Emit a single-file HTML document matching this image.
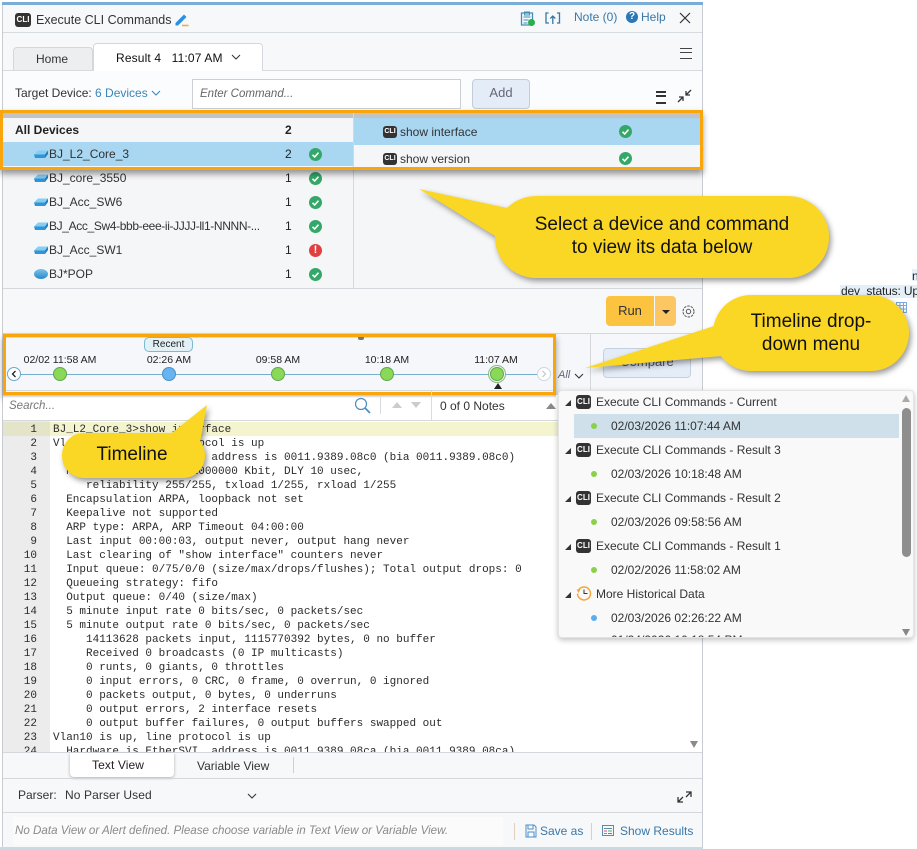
<!DOCTYPE html>
<html><head><meta charset="utf-8"><style>
html,body{margin:0;padding:0;background:#fff}
body{width:917px;height:849px;position:relative;overflow:hidden;font-family:"Liberation Sans",sans-serif;font-size:12px;color:#222}
.a{position:absolute;white-space:pre;line-height:14px}
.b{position:absolute}
.cli{position:absolute;width:15px;height:13px;background:#333;border-radius:3px;color:#fff;font-size:8px;line-height:13px;text-align:center;font-weight:bold}
.ck,.er{position:absolute;width:13px;height:13px;border-radius:50%;background:#34a868;color:#fff}
.er{background:#e04040;font-weight:bold;font-size:11px;line-height:13px;text-align:center}
.sw{position:absolute;left:34px;width:14px;height:8px}
.num{position:absolute;left:3px;width:34px;text-align:right;font:11px/14px "Liberation Mono",monospace;color:#2a2a2a}
.code{position:absolute;left:53px;white-space:pre;font:11px/14px "Liberation Mono",monospace;color:#2a2a2a}
.dot{position:absolute;width:14px;height:14px;border-radius:50%;background:#8ad858;border:1px solid #5fa84a;box-sizing:border-box}
.t{position:absolute;top:354px;width:90px;text-align:center;font-size:10.5px;line-height:13px;color:#222}
.rowt{position:absolute;left:596px;font-size:12px;line-height:14px;color:#333;white-space:pre}
.rowd{position:absolute;left:611px;font-size:12px;line-height:14px;color:#333;white-space:pre}
.tri{position:absolute;left:565px;width:0;height:0;border-left:6px solid transparent;border-bottom:6px solid #333}
.md{position:absolute;left:591px;width:6px;height:6px;border-radius:50%;background:#8ad04a}
.o{position:absolute;border:3px solid #f9a60d;box-sizing:border-box;box-shadow:0 4px 6px rgba(0,0,0,.4)}
</style></head><body>
<svg width="0" height="0" style="position:absolute"><symbol id="c" viewBox="0 0 13 13"><path d="M3.5 6.8l2.2 2.2 3.8-4.4" fill="none" stroke="#fff" stroke-width="1.6"/></symbol>
<symbol id="s" viewBox="0 0 14 8"><path d="M4 .5h10L11 4.500H0z" fill="#86cdf2"/><path d="M0 4.500h11V8H1z" fill="#2f94d8"/><path d="M11 4.500L14 .5v3.500L11 8z" fill="#1f7cc0"/></symbol></svg>

<!-- far right fragments -->
<div class="b" style="left:912px;top:269px;width:5px;height:12px;background:#e4eff8"></div>
<div class="a" style="left:912px;top:269px">n</div>
<div class="b" style="left:840px;top:285px;width:77px;height:13px;background:#e4eff8"></div>
<div class="a" style="left:841px;top:284px;letter-spacing:-.15px">dev_status: Up</div>
<svg class="b" style="left:896px;top:302px" width="11" height="11"><path d="M.5.5h10v10H.5zM.5 3.5h10M.5 7h10M4 .5v10M7.5.5v10" fill="none" stroke="#7ba9e0"/></svg>

<!-- panel -->
<div class="b" style="left:2px;top:2px;width:701px;height:847px;background:#f6f8fa;border-left:1px solid #c8ccd2;border-right:1px solid #c8ccd2;box-sizing:border-box"></div>
<div class="b" style="left:2px;top:2px;width:701px;height:3px;background:#7aacd8"></div>

<!-- header -->
<div class="cli" style="left:15px;top:13px;width:16px;height:14px;line-height:14px">CLI</div>
<div class="a" style="left:36px;top:13px;font-size:12.5px;color:#333">Execute CLI Commands</div>
<svg class="b" style="left:174px;top:12px" width="15" height="15"><path d="M1.500 11L10 2.500l2.500 2.500L4 13.500H1.500z" fill="#2b8fe0"/><path d="M8 13.500h6.500" stroke="#f2a63a" stroke-width="1.500"/></svg>
<svg class="b" style="left:520px;top:10px" width="16" height="17"><path d="M1.5 3h11v12h-11z" fill="none" stroke="#3f8fb8" stroke-width="1.3"/><path d="M4.500 2h5v3h-5zM3.500 7h7M3.500 10h5M3.500 13h4" fill="none" stroke="#3f8fb8"/><circle cx="11.500" cy="12.500" r="3.500" fill="#28b04a"/></svg>
<svg class="b" style="left:545px;top:11px" width="16" height="15"><path d="M3.500 2H1v10h3M12 2h2.500v10H12M7.800 13V5M5.300 7.500l2.500-2.500 2.500 2.500" fill="none" stroke="#3678a8" stroke-width="1.300"/></svg>
<div class="a" style="left:574px;top:10px;color:#3a78a8">Note (0)</div>
<div class="b" style="left:626px;top:11px;width:12px;height:12px;border-radius:50%;background:#2a78b8;color:#fff;font:bold 10px/12px 'Liberation Sans';text-align:center">?</div>
<div class="a" style="left:641px;top:10px;color:#3a78a8">Help</div>
<svg class="b" style="left:679px;top:12px" width="12" height="12"><path d="M1 1l10 10M11 1L1 11" stroke="#333" stroke-width="1.200"/></svg>
<div class="b" style="left:3px;top:32px;width:699px;height:1px;background:#d6dbe0"></div>

<!-- tabs -->
<div class="b" style="left:13px;top:47px;width:80px;height:24px;background:#eceef0;border:1px solid #d4d8dc;border-bottom:0;border-radius:4px 4px 0 0;box-sizing:border-box"></div>
<div class="a" style="left:36px;top:52px;color:#333">Home</div>
<div class="b" style="left:93px;top:43px;width:170px;height:28px;background:#fff;border:1px solid #d4d8dc;border-bottom:0;border-radius:4px 4px 0 0;box-sizing:border-box"></div>
<div class="a" style="left:116px;top:51px;color:#111;letter-spacing:.15px">Result 4   11:07 AM</div>
<svg class="b" style="left:231px;top:54px" width="10" height="7"><path d="M1 1l4 4 4-4" fill="none" stroke="#333"/></svg>
<div class="b" style="left:3px;top:70px;width:90px;height:1px;background:#d6dbe0"></div>
<div class="b" style="left:263px;top:70px;width:439px;height:1px;background:#d6dbe0"></div>
<div class="b" style="left:3px;top:71px;width:699px;height:40px;background:#fbfcfd"></div>
<div class="b" style="left:680px;top:48px;width:12px;height:9px;border-top:1px solid #444;border-bottom:1px solid #444"></div>
<div class="b" style="left:680px;top:52px;width:12px;height:1px;background:#444"></div>

<!-- target row -->
<div class="a" style="left:15px;top:86px;color:#333">Target Device: <span style="color:#3a86b8">6 Devices</span></div>
<svg class="b" style="left:151px;top:90px" width="10" height="7"><path d="M1 1l4 4 4-4" fill="none" stroke="#3a86b8"/></svg>
<div class="b" style="left:192px;top:79px;width:269px;height:30px;background:#fff;border:1px solid #ccd0d4;box-sizing:border-box"></div>
<div class="a" style="left:200px;top:87px;font-style:italic;color:#666;font-size:11.500px">Enter Command...</div>
<div class="b" style="left:472px;top:79px;width:58px;height:30px;background:#e4ecf8;border:1px solid #c4ccd8;border-radius:4px;box-sizing:border-box;text-align:center;line-height:26px;color:#667;font-size:13px">Add</div>
<div class="b" style="left:656px;top:91px;width:10px;height:9px;border-top:2px solid #333;border-bottom:2px solid #333"></div>
<div class="b" style="left:656px;top:95px;width:10px;height:2px;background:#333"></div>
<svg class="b" style="left:677px;top:89px" width="15" height="14"><path d="M14 1l-4.500 4.500M9 2v4h4M1 13l4.500-4.500M6 12V8H2" fill="none" stroke="#333" stroke-width="1.300"/></svg>

<!-- device list -->
<div class="b" style="left:3px;top:112px;width:699px;height:176px;background:#f5f6f8"></div>
<div class="b" style="left:3px;top:112px;width:699px;height:6px;background:#c2c3c5"></div>
<div class="b" style="left:3px;top:142px;width:350px;height:24px;background:#a9d6f1"></div>
<div class="b" style="left:353px;top:112px;width:1px;height:176px;background:#d4d8dc"></div>
<div class="b" style="left:354px;top:118px;width:348px;height:27px;background:#a9d6f1"></div>
<div class="b" style="left:3px;top:288px;width:699px;height:1px;background:#d4d8dc"></div>
<div class="a" style="left:15px;top:123px;font-weight:bold;color:#222">All Devices</div>
<div class="a" style="left:285px;top:123px;font-weight:bold">2</div>

<svg class="sw" style="top:150px"><use href="#s"/></svg><div class="a" style="left:49px;top:147px;color:#333">BJ_L2_Core_3</div><div class="a" style="left:285px;top:147px">2</div><div class="ck" style="left:309px;top:148px"><svg width="13" height="13"><use href="#c"/></svg></div>
<svg class="sw" style="top:174px"><use href="#s"/></svg><div class="a" style="left:49px;top:171px;color:#333">BJ_core_3550</div><div class="a" style="left:285px;top:171px">1</div><div class="ck" style="left:309px;top:172px"><svg width="13" height="13"><use href="#c"/></svg></div>
<svg class="sw" style="top:198px"><use href="#s"/></svg><div class="a" style="left:49px;top:195px;color:#333">BJ_Acc_SW6</div><div class="a" style="left:285px;top:195px">1</div><div class="ck" style="left:309px;top:196px"><svg width="13" height="13"><use href="#c"/></svg></div>
<svg class="sw" style="top:222px"><use href="#s"/></svg><div class="a" style="left:49px;top:219px;color:#333;letter-spacing:-.36px">BJ_Acc_Sw4-bbb-eee-ii-JJJJ-ll1-NNNN-...</div><div class="a" style="left:285px;top:219px">1</div><div class="ck" style="left:309px;top:220px"><svg width="13" height="13"><use href="#c"/></svg></div>
<svg class="sw" style="top:246px"><use href="#s"/></svg><div class="a" style="left:49px;top:243px;color:#333">BJ_Acc_SW1</div><div class="a" style="left:285px;top:243px">1</div><div class="er" style="left:309px;top:244px">!</div>
<div class="b" style="left:34px;top:269px;width:14px;height:10px;border-radius:50%;background:linear-gradient(#7cc4ea,#2a88c8)"></div><div class="a" style="left:49px;top:267px;color:#333">BJ*POP</div><div class="a" style="left:285px;top:267px">1</div><div class="ck" style="left:309px;top:268px"><svg width="13" height="13"><use href="#c"/></svg></div>

<div class="cli" style="left:383px;top:126px;width:14px;height:12px;line-height:12px;font-size:7px">CLI</div><div class="a" style="left:400px;top:125px;color:#333">show interface</div><div class="ck" style="left:619px;top:125px"><svg width="13" height="13"><use href="#c"/></svg></div>
<div class="cli" style="left:383px;top:153px;width:14px;height:12px;line-height:12px;font-size:7px">CLI</div><div class="a" style="left:400px;top:152px;color:#333">show version</div><div class="ck" style="left:619px;top:152px"><svg width="13" height="13"><use href="#c"/></svg></div>
<div class="o" style="left:0;top:110px;width:703px;height:60px"></div>

<!-- run row -->
<div class="b" style="left:606px;top:296px;width:48px;height:30px;background:#fcc340;border-radius:4px 0 0 4px;text-align:center;line-height:30px;font-size:13px;color:#333">Run</div>
<div class="b" style="left:655px;top:296px;width:21px;height:30px;background:#fcc763;border-radius:0 4px 4px 0"></div>
<div class="b" style="left:662px;top:310px;border:4px solid transparent;border-top:4px solid #222;border-bottom:0"></div>
<svg class="b" style="left:682px;top:305px" width="13" height="13"><circle cx="6.500" cy="6.500" r="5.500" fill="none" stroke="#555" stroke-dasharray="2.500 1"/><circle cx="6.500" cy="6.500" r="2.200" fill="none" stroke="#555"/></svg>
<div class="b" style="left:3px;top:333px;width:699px;height:1px;background:#d4d8dc"></div>

<!-- timeline -->
<div class="b" style="left:3px;top:334px;width:699px;height:61px;background:#f5f7fa"></div>
<div class="b" style="left:5px;top:336px;width:549px;height:2px;background:#d8dade"></div>
<div class="b" style="left:358px;top:336px;width:6px;height:4px;background:#777;border-radius:2px"></div>
<div class="b" style="left:590px;top:334px;width:1px;height:57px;background:#d4d8dc"></div>
<div class="b" style="left:603px;top:348px;width:88px;height:30px;background:#e4ecf8;border:1px solid #c4d0e0;border-radius:4px;box-sizing:border-box;text-align:center;line-height:26px;color:#556;font-size:13px">Compare</div>
<div class="b" style="left:20px;top:374px;width:520px;height:1px;background:#7aaed0"></div>
<div class="b" style="left:144px;top:337px;width:49px;height:15px;border:1px solid #7cb8d0;border-radius:5px;background:#e2f1f6;box-sizing:border-box;text-align:center;font-size:10px;line-height:13px;color:#222">Recent</div>
<div class="t" style="left:15px">02/02 11:58 AM</div>
<div class="t" style="left:124px">02:26 AM</div>
<div class="t" style="left:233px">09:58 AM</div>
<div class="t" style="left:342px">10:18 AM</div>
<div class="t" style="left:451px">11:07 AM</div>
<div class="dot" style="left:53px;top:367px"></div>
<div class="dot" style="left:162px;top:367px;background:#68b4f0;border-color:#4a90c8"></div>
<div class="dot" style="left:271px;top:367px"></div>
<div class="dot" style="left:380px;top:367px"></div>
<div class="dot" style="left:490px;top:367px;box-shadow:0 0 0 1px #f5f7fa,0 0 0 2px #8ab878"></div>
<div class="b" style="left:494px;top:383px;border:4px solid transparent;border-bottom:6px solid #222;border-top:0"></div>
<div class="b" style="left:7px;top:367px;width:14px;height:14px;border:1px solid #6aa8d0;border-radius:50%;background:#fff;box-sizing:border-box"></div>
<svg class="b" style="left:11px;top:370px" width="6" height="8"><path d="M4.500 1L1.500 4l3 3" fill="none" stroke="#222" stroke-width="1.300"/></svg>
<div class="b" style="left:537px;top:367px;width:14px;height:14px;border:1px solid #ccd8e0;border-radius:50%;background:#fff;box-sizing:border-box"></div>
<svg class="b" style="left:541px;top:370px" width="6" height="8"><path d="M1.500 1l3 3-3 3" fill="none" stroke="#ccc" stroke-width="1.300"/></svg>
<div class="a" style="left:558px;top:368px;font-style:italic;font-size:11px;color:#667">All</div>
<svg class="b" style="left:574px;top:373px" width="10" height="7"><path d="M1 1l4 4 4-4" fill="none" stroke="#333" stroke-width="1.100"/></svg>
<div class="b" style="left:3px;top:390px;width:552px;height:1px;background:#d4d8dc"></div>
<div class="o" style="left:3px;top:334px;width:553px;height:61px"></div>

<!-- search row -->
<div class="b" style="left:3px;top:395px;width:555px;height:26px;background:#fff"></div>
<div class="b" style="left:3px;top:395px;width:553px;height:3px;background:linear-gradient(rgba(0,0,0,.25),rgba(0,0,0,0))"></div>
<div class="b" style="left:3px;top:420px;width:699px;height:1px;background:#d4d8dc"></div>
<div class="a" style="left:9px;top:399px;font-style:italic;color:#777;font-size:11.500px">Search...</div>
<svg class="b" style="left:354px;top:397px" width="17" height="17"><circle cx="7" cy="7" r="5.500" fill="none" stroke="#4a90c0" stroke-width="1.200"/><path d="M11 11l5 5" stroke="#4a90c0" stroke-width="1.800"/></svg>
<div class="b" style="left:380px;top:397px;width:1px;height:17px;background:#d8dce0"></div>
<div class="b" style="left:392px;top:402px;border:5px solid transparent;border-bottom:6px solid #ccc;border-top:0"></div>
<div class="b" style="left:411px;top:402px;border:5px solid transparent;border-top:6px solid #ccc;border-bottom:0"></div>
<div class="b" style="left:431px;top:391px;width:1px;height:29px;background:#d8dce0"></div>
<div class="a" style="left:440px;top:399px;color:#333">0 of 0 Notes</div>
<div class="b" style="left:546px;top:403px;border:5px solid transparent;border-bottom:6px solid #888;border-top:0"></div>

<!-- code -->
<div class="b" style="left:3px;top:421px;width:699px;height:331px;background:#fff"></div>
<div class="b" style="left:3px;top:421px;width:47px;height:331px;background:#ececec"></div>
<div class="b" style="left:3px;top:422px;width:47px;height:14px;background:#e4e5c8"></div>
<div class="b" style="left:50px;top:422px;width:510px;height:14px;background:#f4f5cf"></div>
<div class="b" style="left:3px;top:421px;width:699px;height:331px;overflow:hidden">
<div style="position:absolute;left:-3px;top:-420px;width:700px;height:760px">
<div class="num" style="top:422px">1</div><div class="code" style="top:422px">BJ_L2_Core_3&gt;show interface</div>
<div class="num" style="top:436px">2</div><div class="code" style="top:436px">Vlan1 is up, line protocol is up</div>
<div class="num" style="top:450px">3</div><div class="code" style="top:450px">  Hardware is EtherSVI, address is 0011.9389.08c0 (bia 0011.9389.08c0)</div>
<div class="num" style="top:464px">4</div><div class="code" style="top:464px">  MTU 1500 bytes, BW 1000000 Kbit, DLY 10 usec,</div>
<div class="num" style="top:478px">5</div><div class="code" style="top:478px">     reliability 255/255, txload 1/255, rxload 1/255</div>
<div class="num" style="top:492px">6</div><div class="code" style="top:492px">  Encapsulation ARPA, loopback not set</div>
<div class="num" style="top:506px">7</div><div class="code" style="top:506px">  Keepalive not supported</div>
<div class="num" style="top:520px">8</div><div class="code" style="top:520px">  ARP type: ARPA, ARP Timeout 04:00:00</div>
<div class="num" style="top:534px">9</div><div class="code" style="top:534px">  Last input 00:00:03, output never, output hang never</div>
<div class="num" style="top:548px">10</div><div class="code" style="top:548px">  Last clearing of "show interface" counters never</div>
<div class="num" style="top:562px">11</div><div class="code" style="top:562px">  Input queue: 0/75/0/0 (size/max/drops/flushes); Total output drops: 0</div>
<div class="num" style="top:576px">12</div><div class="code" style="top:576px">  Queueing strategy: fifo</div>
<div class="num" style="top:590px">13</div><div class="code" style="top:590px">  Output queue: 0/40 (size/max)</div>
<div class="num" style="top:604px">14</div><div class="code" style="top:604px">  5 minute input rate 0 bits/sec, 0 packets/sec</div>
<div class="num" style="top:618px">15</div><div class="code" style="top:618px">  5 minute output rate 0 bits/sec, 0 packets/sec</div>
<div class="num" style="top:632px">16</div><div class="code" style="top:632px">     14113628 packets input, 1115770392 bytes, 0 no buffer</div>
<div class="num" style="top:646px">17</div><div class="code" style="top:646px">     Received 0 broadcasts (0 IP multicasts)</div>
<div class="num" style="top:660px">18</div><div class="code" style="top:660px">     0 runts, 0 giants, 0 throttles</div>
<div class="num" style="top:674px">19</div><div class="code" style="top:674px">     0 input errors, 0 CRC, 0 frame, 0 overrun, 0 ignored</div>
<div class="num" style="top:688px">20</div><div class="code" style="top:688px">     0 packets output, 0 bytes, 0 underruns</div>
<div class="num" style="top:702px">21</div><div class="code" style="top:702px">     0 output errors, 2 interface resets</div>
<div class="num" style="top:716px">22</div><div class="code" style="top:716px">     0 output buffer failures, 0 output buffers swapped out</div>
<div class="num" style="top:730px">23</div><div class="code" style="top:730px">Vlan10 is up, line protocol is up</div>
<div class="num" style="top:744px">24</div><div class="code" style="top:744px">  Hardware is EtherSVI, address is 0011.9389.08ca (bia 0011.9389.08ca)</div>
</div></div>
<div class="b" style="left:690px;top:741px;border:4.500px solid transparent;border-top:7px solid #8a8a8a;border-bottom:0"></div>

<!-- bottom -->
<div class="b" style="left:3px;top:752px;width:699px;height:26px;background:#f6f8fa;border-top:1px solid #d4d8dc;box-sizing:border-box"></div>
<div class="b" style="left:70px;top:753px;width:104px;height:24px;background:#fff;border-radius:0 0 4px 4px;box-shadow:0 1px 3px rgba(0,0,0,.3)"></div>
<div class="a" style="left:92px;top:758px;color:#222;letter-spacing:.1px">Text View</div>
<div class="a" style="left:197px;top:759px;color:#333">Variable View</div>
<div class="b" style="left:293px;top:757px;width:1px;height:16px;background:#ccd0d4"></div>
<div class="b" style="left:3px;top:778px;width:699px;height:1px;background:#d4d8dc"></div>
<div class="a" style="left:18px;top:788px;color:#333">Parser:</div>
<div class="a" style="left:65px;top:788px;color:#333;letter-spacing:.1px">No Parser Used</div>
<svg class="b" style="left:247px;top:793px" width="10" height="7"><path d="M1 1l4 4 4-4" fill="none" stroke="#333" stroke-width="1.100"/></svg>
<svg class="b" style="left:677px;top:790px" width="15" height="14"><path d="M9 2h5v5M14 2L9 7M6 12H1V7M1 12l5-5" fill="none" stroke="#333" stroke-width="1.300"/></svg>
<div class="b" style="left:3px;top:812px;width:699px;height:1px;background:#d4d8dc"></div>
<div class="b" style="left:13px;top:817px;width:490px;height:28px;background:#fbfbfc"></div>
<div class="a" style="left:15px;top:824px;font-style:italic;color:#8a8a8a;font-size:11.600px">No Data View or Alert defined. Please choose variable in Text View or Variable View.</div>
<div class="b" style="left:514px;top:823px;width:1px;height:17px;background:#e0cfba"></div>
<svg class="b" style="left:525px;top:824px" width="12" height="14"><path d="M1 1h8l2 2v10H1zM3 1v4h5V1M3 13V8h6v5" fill="none" stroke="#4a90c8"/></svg>
<div class="a" style="left:540px;top:824px;color:#3a78a8">Save as</div>
<div class="b" style="left:591px;top:823px;width:1px;height:17px;background:#e0cfba"></div>
<svg class="b" style="left:602px;top:825px" width="12" height="11"><path d="M.5.5h11v10H.5z" fill="none" stroke="#5a8ab0"/><path d="M2 3.500h8" stroke="#5a8ab0"/><path d="M2 6h3" stroke="#e05050"/><path d="M6 6h4" stroke="#50b060"/><path d="M2 8.500h3" stroke="#50b060"/><path d="M6 8.500h4" stroke="#e05050"/></svg>
<div class="a" style="left:620px;top:824px;color:#3a78a8">Show Results</div>
<div class="b" style="left:0;top:847px;width:703px;height:2px;background:#c4dce4"></div>

<!-- dropdown -->
<div class="b" style="left:558px;top:390px;width:356px;height:248px;background:#f9f9f9;border:1px solid #e4e4e4;border-radius:4px;box-shadow:0 2px 6px rgba(0,0,0,.25);box-sizing:border-box"></div>
<div class="b" style="left:574px;top:414px;width:325px;height:24px;background:#cfe0ea"></div>
<div class="tri" style="top:400px"></div><div class="cli" style="left:576px;top:395px;height:14px;line-height:14px">CLI</div><div class="rowt" style="top:395px">Execute CLI Commands - Current</div>
<div class="md" style="top:423px"></div><div class="rowd" style="top:419px">02/03/2026 11:07:44 AM</div>
<div class="tri" style="top:448px"></div><div class="cli" style="left:576px;top:443px;height:14px;line-height:14px">CLI</div><div class="rowt" style="top:443px">Execute CLI Commands - Result 3</div>
<div class="md" style="top:471px"></div><div class="rowd" style="top:467px">02/03/2026 10:18:48 AM</div>
<div class="tri" style="top:496px"></div><div class="cli" style="left:576px;top:491px;height:14px;line-height:14px">CLI</div><div class="rowt" style="top:491px">Execute CLI Commands - Result 2</div>
<div class="md" style="top:519px"></div><div class="rowd" style="top:515px">02/03/2026 09:58:56 AM</div>
<div class="tri" style="top:544px"></div><div class="cli" style="left:576px;top:539px;height:14px;line-height:14px">CLI</div><div class="rowt" style="top:539px">Execute CLI Commands - Result 1</div>
<div class="md" style="top:567px"></div><div class="rowd" style="top:563px">02/02/2026 11:58:02 AM</div>
<div class="tri" style="top:592px"></div>
<svg class="b" style="left:576px;top:585px" width="16" height="16"><path d="M2.500 5A6.500 6.500 0 1 1 1.500 8.500" fill="none" stroke="#f5a73a" stroke-width="1.500"/><path d="M.5 4.500h4L2.500 8z" fill="#f5a73a"/><path d="M8 4.500V8.500h3.500" fill="none" stroke="#333"/></svg>
<div class="rowt" style="top:587px">More Historical Data</div>
<div class="md" style="top:615px;background:#5aaef0"></div><div class="rowd" style="top:611px">02/03/2026 02:26:22 AM</div>
<div class="b" style="left:611px;top:634px;width:220px;height:3px;overflow:hidden"><div class="a" style="left:0;top:-1px;color:#333">01/24/2026 10:18:54 PM</div></div>
<div class="b" style="left:902px;top:408px;width:9px;height:149px;background:#8e8e8e;border-radius:5px"></div>
<div class="b" style="left:902px;top:395px;border:4.500px solid transparent;border-bottom:7px solid #aaa;border-top:0"></div>
<div class="b" style="left:902px;top:629px;border:4.500px solid transparent;border-top:7px solid #888;border-bottom:0"></div>

<!-- callouts -->
<svg class="b" style="left:0;top:0;filter:drop-shadow(2px 3px 3px rgba(0,0,0,.4))" width="917" height="500">
<rect x="495" y="196" width="334" height="82" rx="41" fill="#fbd725"/>
<path d="M419 189L507 208 495 236z" fill="#fbd725"/>
<rect x="713" y="295" width="196" height="76" rx="38" fill="#fbd725"/>
<path d="M585 368L714 326 722 356z" fill="#fbd725"/>
<rect x="62" y="433" width="143" height="45" rx="22" fill="#fbd725"/>
<path d="M207 405L168 436 200 442z" fill="#fbd725"/>
</svg>
<div class="a" style="left:495px;top:213px;width:334px;text-align:center;color:#111;font-size:19px;line-height:23px">Select a device and command
to view its data below</div>
<div class="a" style="left:713px;top:310px;width:196px;text-align:center;color:#111;font-size:19px;line-height:23px">Timeline drop-
down menu</div>
<div class="a" style="left:62px;top:443px;width:140px;text-align:center;color:#111;font-size:19px;line-height:23px">Timeline</div>
</body></html>
